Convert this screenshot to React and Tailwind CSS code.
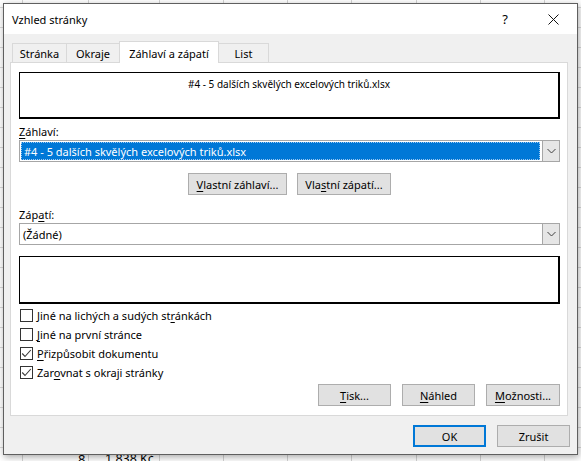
import React from "react";

const colClasses = [
  "w-[23px]", "w-[66px]", "w-[71px]", "w-[64px]", "w-[64px]", "w-[64px]",
  "w-[65px]", "w-[64px]", "w-[64px]", "w-[64px]",
];

function U({ children }) {
  return <span className="underline decoration-1 underline-offset-[2px]">{children}</span>;
}

function Chevron() {
  return (
    <svg width="9" height="6" viewBox="0 0 9 6" className="block">
      <polyline points="0.5,1 4.5,5 8.5,1" fill="none" stroke="#404040" strokeWidth="1" />
    </svg>
  );
}

function Check() {
  return (
    <svg width="11" height="11" viewBox="0 0 11 11" className="block">
      <polyline points="1.2,5.5 4,8.5 9.8,2" fill="none" stroke="#3a3a3a" strokeWidth="1.1" />
    </svg>
  );
}

function CheckRow({ checked, children }) {
  return (
    <div className="h-[19px] flex items-center">
      <div className="ml-[1px] w-[13px] h-[13px] border border-[#333333] bg-white flex items-center justify-center">
        {checked ? <Check /> : null}
      </div>
      <span className="ml-[4px] leading-none">{children}</span>
    </div>
  );
}

function Btn({ w, children, primary }) {
  return (
    <div
      className={
        primary
          ? "h-[22px] flex items-center justify-center bg-[#e1e1e1] border-2 border-[#0078d7] " + w
          : "h-[22px] flex items-center justify-center bg-[#e1e1e1] border border-[#adadad] " + w
      }
    >
      <span className="leading-none">{children}</span>
    </div>
  );
}

export default function App() {
  return (
    <div className="relative w-[581px] h-[461px] overflow-hidden bg-white text-black font-['Noto_Sans',sans-serif] text-[11px]">
      {/* Excel sheet behind */}
      <div className="absolute inset-0 flex bg-[repeating-linear-gradient(to_bottom,transparent_0px,transparent_7px,#dadada_7px,#dadada_8px,transparent_8px,transparent_20px)]">
        {colClasses.map((c, i) => (
          <div key={i} className={"h-full shrink-0 border-r border-[#d4d4d4] " + c} />
        ))}
      </div>
      <span className="absolute left-[78px] top-[-11px] text-[13px] leading-none">0</span>
      <span className="absolute left-[105px] top-[-11px] text-[12.5px] leading-none">3 428 Kč</span>
      <span className="absolute left-[78px] top-[453px] text-[13px] leading-none">8</span>
      <span className="absolute left-[105px] top-[453px] text-[12.5px] leading-none">1 838 Kč</span>

      {/* Dialog window */}
      <div className="absolute left-[3px] top-[3px] w-[575px] h-[452px] flex flex-col border border-[#5f5f5f] bg-[#f0f0f0] shadow-[1px_2px_7px_rgba(0,0,0,0.35)]">
        {/* Title bar */}
        <div className="h-[30px] shrink-0 bg-white flex items-center">
          <span className="ml-[8px] text-[11px] leading-none">Vzhled stránky</span>
          <span className="ml-auto mr-[40px] text-[13px] leading-none">?</span>
          <svg width="11" height="11" viewBox="0 0 11 11" className="mr-[18px] block">
            <line x1="0.5" y1="0.5" x2="10.5" y2="10.5" stroke="#111" strokeWidth="1" />
            <line x1="10.5" y1="0.5" x2="0.5" y2="10.5" stroke="#111" strokeWidth="1" />
          </svg>
        </div>

        {/* Body */}
        <div className="flex-1 flex flex-col px-[6px]">
          {/* Tabs */}
          <div className="relative z-10 mt-[7px] h-[21px] flex items-end ml-[2px]">
            <div className="w-[54px] h-[19px] flex items-center justify-center border-t border-l border-[#d9d9d9] bg-[#f0f0f0]">
              <span className="leading-none">Stránka</span>
            </div>
            <div className="w-[53px] h-[19px] flex items-center justify-center border-t border-l border-[#d9d9d9] bg-[#f0f0f0]">
              <span className="leading-none">Okraje</span>
            </div>
            <div className="w-[100px] h-[22px] -mb-[1px] pt-[1px] flex items-center justify-center border-t border-x border-[#d9d9d9] bg-white">
              <span className="leading-none">Záhlaví a zápatí</span>
            </div>
            <div className="w-[50px] h-[19px] flex items-center justify-center border-t border-r border-[#d9d9d9] bg-[#f0f0f0]">
              <span className="leading-none">List</span>
            </div>
          </div>

          {/* Panel */}
          <div className="w-[558px] h-[354px] bg-white border border-[#d9d9d9] pl-[8px] flex flex-col">
            <div className="w-[541px]">
              {/* Header preview */}
              <div className="mt-[9px] h-[47px] border-t border-l border-r-2 border-b-2 border-black flex justify-center pt-[6px]">
                <span className="text-[10px] leading-none">#4 - 5 dalších skvělých excelových triků.xlsx</span>
              </div>

              <div className="mt-[5px] h-[15px] flex items-center">
                <span className="leading-none"><U>Z</U>áhlaví:</span>
              </div>
              <div className="mt-[1px] h-[22px] border border-[#a6a6a6] flex bg-white">
                <div className="flex-1 m-[1px] mr-[2px] bg-[#0078d7] border border-dotted border-[#9cc7ef] flex items-center pl-[2px]">
                  <span className="text-white leading-none">#4 - 5 dalších skvělých excelových triků.xlsx</span>
                </div>
                <div className="w-[17px] h-full bg-[#e6e6e6] border-l border-[#a6a6a6] flex items-center justify-center">
                  <Chevron />
                </div>
              </div>

              <div className="mt-[11px] flex justify-center gap-[10px]">
                <Btn w="w-[99px]"><U>V</U>lastní záhlaví...</Btn>
                <Btn w="w-[94px]">Vla<U>s</U>tní zápatí...</Btn>
              </div>

              <div className="mt-[12px] h-[15px] flex items-center">
                <span className="leading-none">Záp<U>a</U>tí:</span>
              </div>
              <div className="mt-[1px] h-[22px] border border-[#a6a6a6] flex bg-white">
                <div className="flex-1 flex items-center pl-[3px]">
                  <span className="leading-none">(Žádné)</span>
                </div>
                <div className="w-[17px] h-full bg-[#e6e6e6] border-l border-[#a6a6a6] flex items-center justify-center">
                  <Chevron />
                </div>
              </div>

              {/* Footer preview */}
              <div className="mt-[11px] h-[48px] border-t border-l border-r-2 border-b-2 border-black" />

              <div className="mt-[2px] flex flex-col">
                <CheckRow checked={false}>Jiné na lichých a sudých st<U>r</U>ánkách</CheckRow>
                <CheckRow checked={false}><U>J</U>iné na první stránce</CheckRow>
                <CheckRow checked={true}><U>P</U>řizpůsobit dokumentu</CheckRow>
                <CheckRow checked={true}>Zar<U>o</U>vnat s okraji stránky</CheckRow>
              </div>

              <div className="mt-[2px] flex justify-end gap-[11px]">
                <Btn w="w-[73px]"><U>T</U>isk...</Btn>
                <Btn w="w-[73px]"><U>N</U>áhled</Btn>
                <Btn w="w-[74px]"><U>M</U>ožnosti...</Btn>
              </div>
            </div>
          </div>

          {/* OK / Cancel */}
          <div className="mt-[9px] flex justify-end gap-[11px] pr-[1px]">
            <Btn w="w-[73px]" primary>OK</Btn>
            <Btn w="w-[73px]">Zrušit</Btn>
          </div>
        </div>
      </div>
    </div>
  );
}
